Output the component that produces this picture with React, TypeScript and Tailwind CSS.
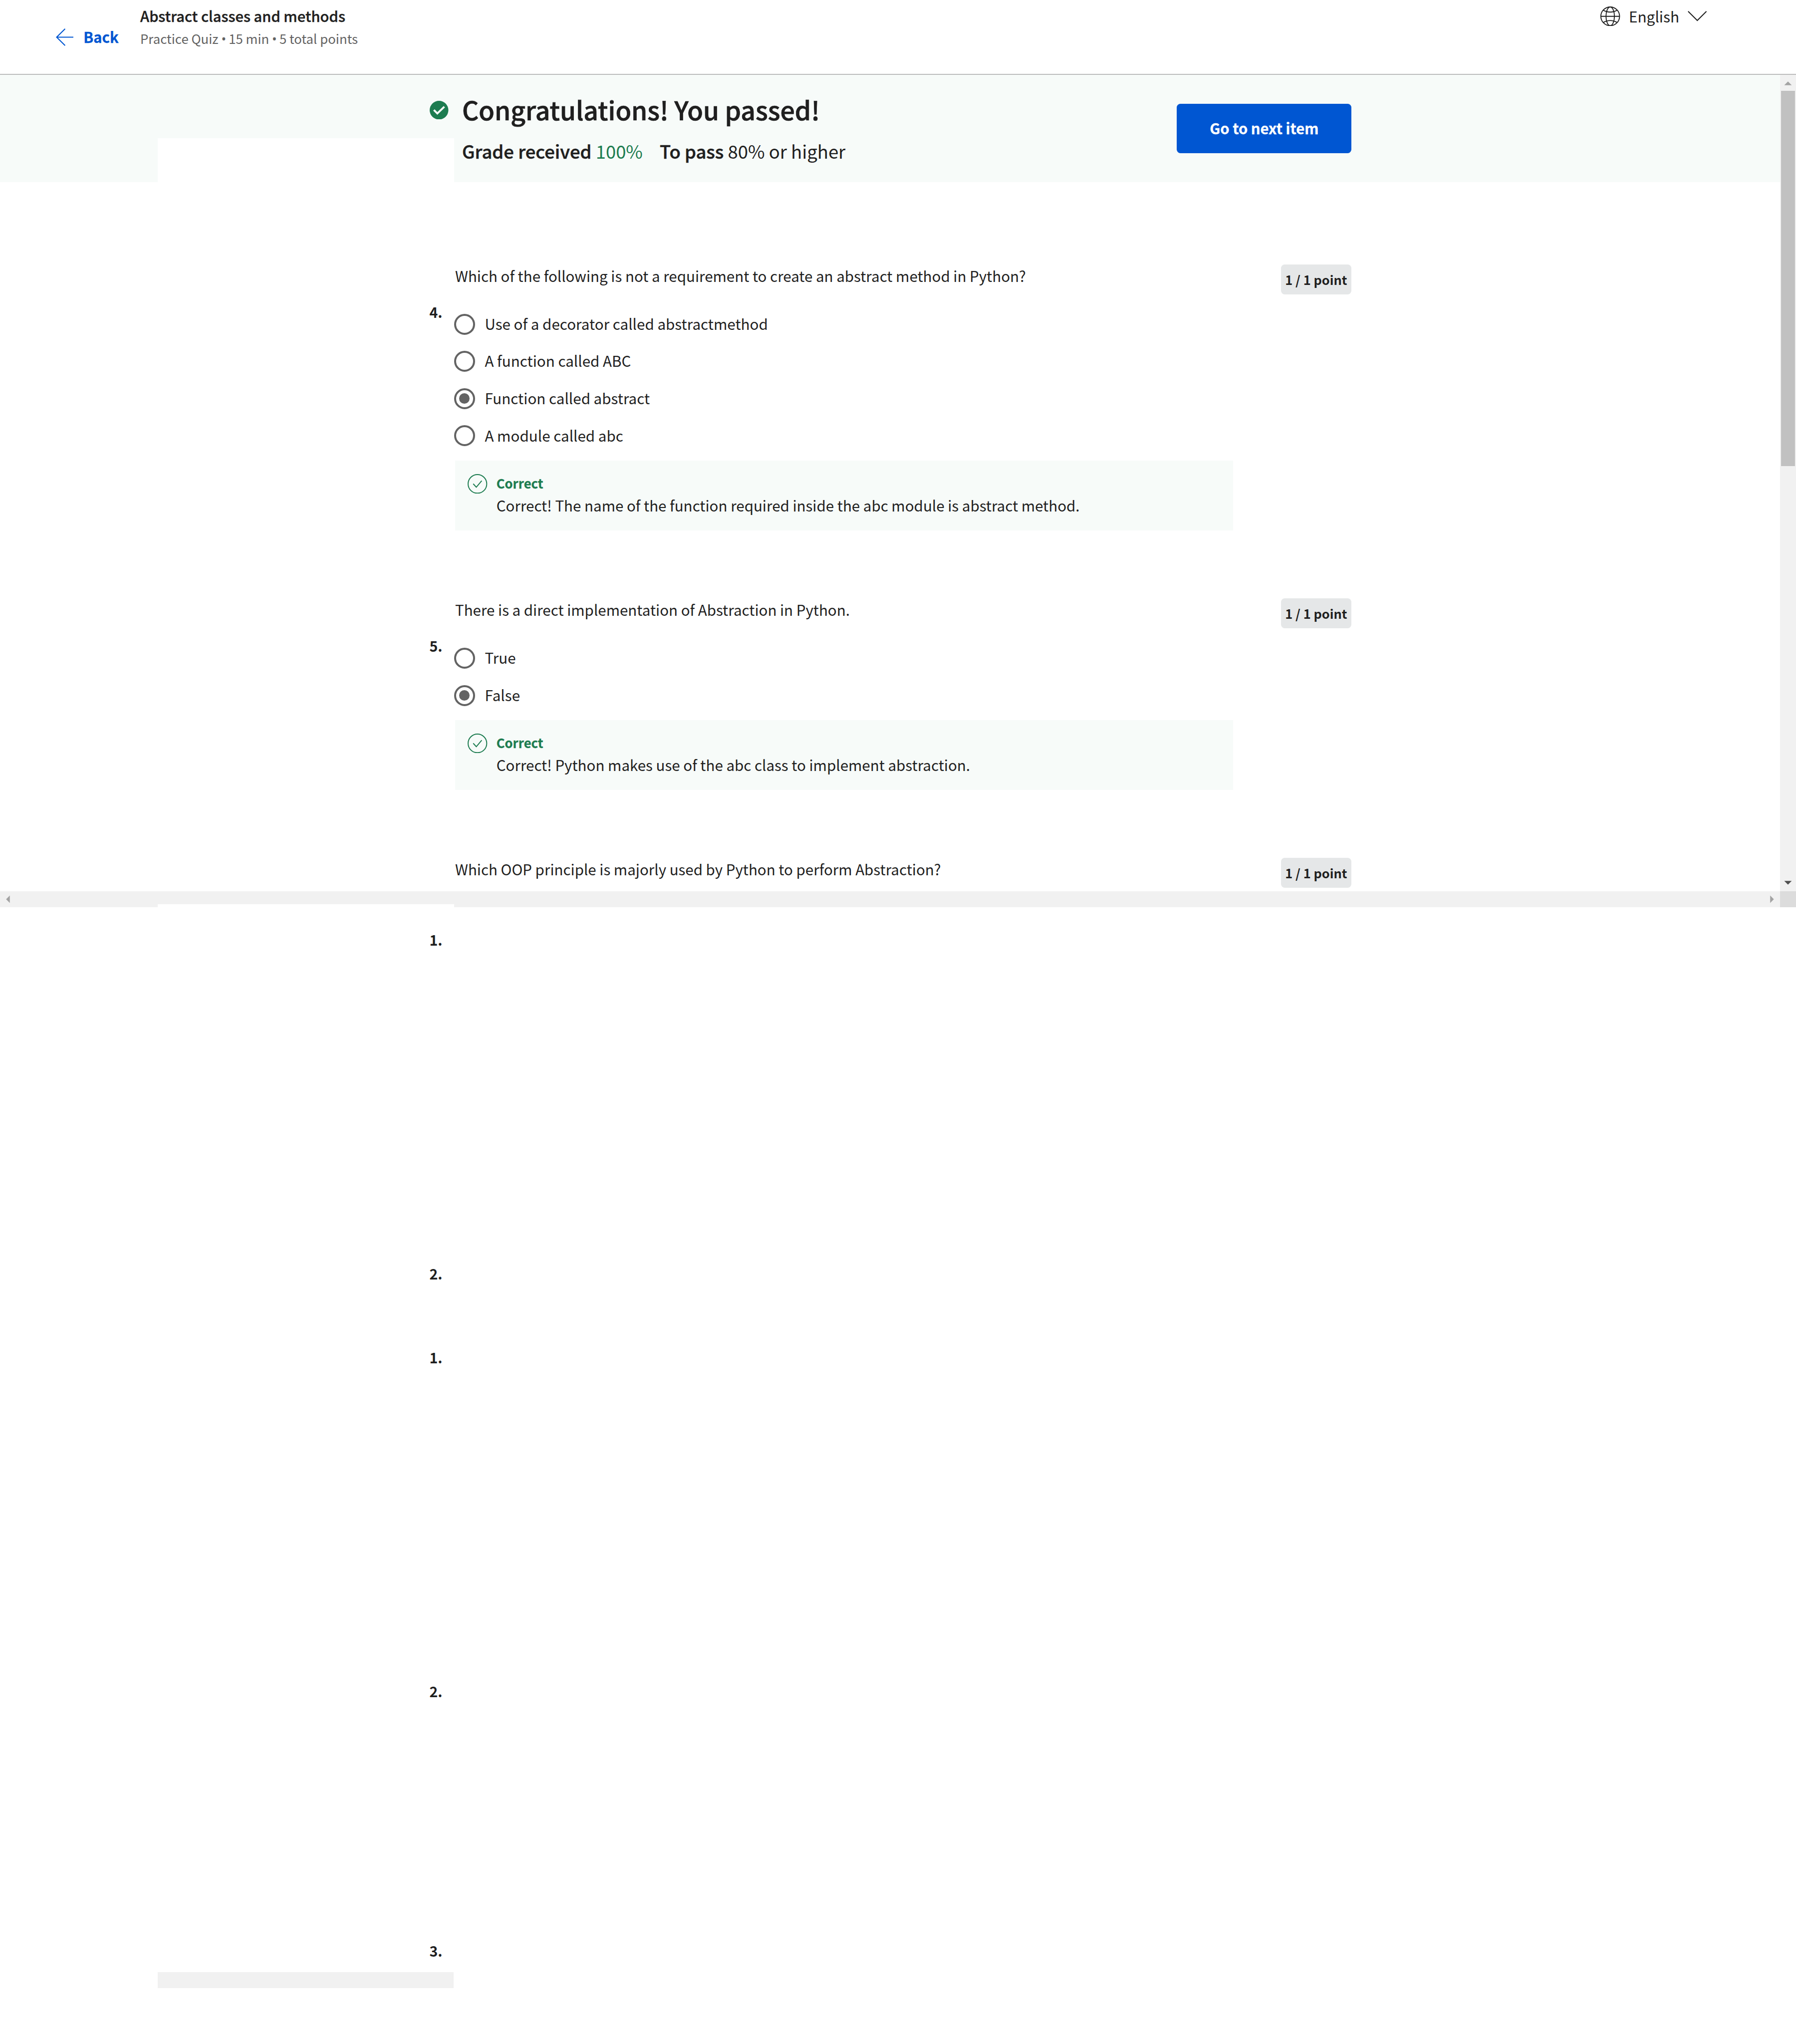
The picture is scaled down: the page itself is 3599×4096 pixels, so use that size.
type Option = { label: string; checked?: boolean };
type Question = { no: string; prompt: string; options: Option[]; feedback: string };

const questions: Question[] = [
  {
    no: "4.",
    prompt: "Which of the following is not a requirement to create an abstract method in Python?",
    options: [
      { label: "Use of a decorator called abstractmethod" },
      { label: "A function called ABC" },
      { label: "Function called abstract", checked: true },
      { label: "A module called abc" },
    ],
    feedback: "Correct! The name of the function required inside the abc module is abstract method.",
  },
  {
    no: "5.",
    prompt: "There is a direct implementation of Abstraction in Python.",
    options: [{ label: "True" }, { label: "False", checked: true }],
    feedback: "Correct! Python makes use of the abc class to implement abstraction.",
  },
];

function BackArrow() {
  return (
    <svg viewBox="0 0 37 37" className="h-[35px] w-[35px]" fill="none" stroke="#0056d2" strokeWidth="2.2">
      <path d="M19.5 0.8 1.6 18.5 19.5 36.2M1.6 18.5H37" />
    </svg>
  );
}

function Globe() {
  return (
    <svg viewBox="0 0 42 42" className="h-[39.4px] w-[39.4px]" fill="none" stroke="#1f1f1f" strokeWidth="2">
      <circle cx="21" cy="21" r="20" />
      <ellipse cx="21" cy="21" rx="9" ry="20" />
      <path d="M1 21H41M6 7.8Q21 16.2 36 7.8M6 34.2Q21 25.8 36 34.2" />
    </svg>
  );
}

function ChevronDown() {
  return (
    <svg viewBox="0 0 41 22" className="h-[20.5px] w-[38.4px]" fill="none" stroke="#1f1f1f" strokeWidth="2.1">
      <path d="M0.8 0.8 20.5 20.4 40.2 0.8" />
    </svg>
  );
}

function PassedIcon() {
  return (
    <svg viewBox="0 0 40 40" className="mt-[51.5px] h-[37.5px] w-[37.5px]">
      <circle cx="20" cy="20" r="20" fill="#1d7c50" />
      <path d="M9 19.6 16.4 27 31.3 12.6" fill="none" stroke="#f7fbf9" strokeWidth="4.2" />
    </svg>
  );
}

function CorrectIcon() {
  return (
    <svg viewBox="0 0 42 42" className="mt-[26.8px] h-[39.4px] w-[39.4px] shrink-0" fill="none" stroke="#1d7c50" strokeWidth="2.1">
      <circle cx="21" cy="21" r="19.9" />
      <path d="M12 20.8 18.6 28 30.2 14.2" />
    </svg>
  );
}

function Points() {
  return (
    <span className="flex h-[60px] w-[140.6px] shrink-0 items-center justify-center rounded-[7.5px] bg-[#e5e7e8] text-[25.45px] font-bold leading-[36px]">
      1 / 1 point
    </span>
  );
}

function Prompt({ text }: { text: string }) {
  return (
    <div className="flex h-[60px] w-[1795.7px] items-start justify-between">
      <p className="whitespace-nowrap pt-[1px] text-[29.52px] leading-[44px]">{text}</p>
      <Points />
    </div>
  );
}

function Radio({ checked }: { checked?: boolean }) {
  return (
    <span className="flex h-[42px] w-[42px] items-center justify-center rounded-full border-[4.5px] border-[#636363]">
      {checked && <span className="h-[21px] w-[21px] rounded-full bg-[#636363]" />}
    </span>
  );
}

function QuestionBlock({ q }: { q: Question }) {
  return (
    <article className="flex pb-[136px]">
      <span className="w-[51.5px] shrink-0 pt-[75px] text-[28.5px] font-bold leading-[40px]">{q.no}</span>
      <div>
        <Prompt text={q.prompt} />
        <ul className="mt-[22.5px]">
          {q.options.map((o) => (
            <li key={o.label} className="-ml-[2.5px] flex h-[74.6px] items-center gap-[20px]">
              <Radio checked={o.checked} />
              <span className="pb-[1.5px] text-[29.6px] leading-[44px]">{o.label}</span>
            </li>
          ))}
        </ul>
        <div className="mt-[12.1px] flex h-[140.4px] w-[1558.7px] gap-[18px] bg-[#f7fbf9] pl-[25.3px]">
          <CorrectIcon />
          <div className="pt-[27.2px]">
            <p className="text-[25.68px] font-bold leading-[36px] text-[#1d7c50] [-webkit-text-stroke:0.3px]">Correct</p>
            <p className="mt-[5.2px] whitespace-nowrap text-[29.54px] leading-[44px]">{q.feedback}</p>
          </div>
        </div>
      </div>
    </article>
  );
}

function Header() {
  return (
    <header className="flex h-[150px] items-start border-b-2 border-[#bdbdbd] pl-[112px] pr-[178.5px]">
      <div className="mt-[52px] flex h-[44px] w-[169px] items-center gap-[20.3px] text-[#0056d2]">
        <BackArrow />
        <span className="pb-[2.5px] text-[29.35px] font-bold leading-[40px] [-webkit-text-stroke:0.3px]">Back</span>
      </div>
      <div className="mt-[12.6px]">
        <h1 className="text-[29.15px] font-medium leading-[36px] [-webkit-text-stroke:0.4px]">Abstract classes and methods</h1>
        <p className="mt-[10px] flex whitespace-pre text-[25.8px] leading-[36px] text-[#636363]">
          <span>Practice Quiz </span>
          <span className="w-[9px] text-center font-['Noto_Sans']">•</span>
          <span> 15 min </span>
          <span className="w-[9px] text-center font-['Noto_Sans']">•</span>
          <span> 5 total points</span>
        </p>
      </div>
      <div className="ml-auto mt-[11px] flex h-[43px] items-center">
        <Globe />
        <span className="ml-[17px] pb-[2px] text-[29.8px] leading-[40px]">English</span>
        <span className="ml-[17px]">
          <ChevronDown />
        </span>
      </div>
    </header>
  );
}

function Banner() {
  return (
    <section className="relative flex h-[214.6px] items-start bg-[#f7fbf9] pl-[861.3px]">
      {/* blank side rail over the banner's lower edge */}
      <div className="absolute bottom-0 left-[316px] h-[88px] w-[593.5px] bg-white" />
      <PassedIcon />
      <div className="ml-[27.2px] w-[1432px] pt-[33.7px]">
        <h2 className="text-[51.6px] font-medium leading-[70px] [-webkit-text-stroke:0.7px]">Congratulations! You passed!</h2>
        <p className="mt-[23px] flex whitespace-pre text-[36.45px] leading-[50px]">
          <span className="w-[396px]">
            <span className="font-medium [-webkit-text-stroke:0.5px]">Grade received </span>
            <span className="text-[#1d7c50]">100%</span>
          </span>
          <span>
            <span className="font-medium [-webkit-text-stroke:0.5px]">To pass </span>80% or higher
          </span>
        </p>
      </div>
      <button className="mt-[58px] flex h-[99.4px] w-[349.7px] items-center justify-center rounded-[7.5px] bg-[#0056d2] pb-[4px] pl-px text-[29.25px] font-bold leading-[40px] text-white [-webkit-text-stroke:0.3px]">
        Go to next item
      </button>
    </section>
  );
}

function Triangle({ points, color }: { points: string; color: string }) {
  return (
    <svg viewBox="0 0 34 34" className="h-[31.9px] w-[31.9px]">
      <polygon points={points} fill={color} />
    </svg>
  );
}

function VerticalScrollbar() {
  return (
    <div className="flex w-[32px] shrink-0 flex-col items-center justify-between bg-[#f1f1f1]">
      <div className="flex flex-col items-center">
        <Triangle points="9,22 25,22 17,14" color="#a3a3a3" />
        <div className="h-[751.7px] w-[28.1px] bg-[#c1c1c1]" />
      </div>
      <Triangle points="9,12 25,12 17,20" color="#505050" />
    </div>
  );
}

function HorizontalScrollbar() {
  return (
    <div className="relative flex h-[31.9px] bg-[#f1f1f1]">
      <div className="absolute bottom-0 left-[316px] h-[6.5px] w-[593.5px] bg-white" />
      <div className="flex flex-1 justify-between">
        <Triangle points="21,9 21,25 13,17" color="#a3a3a3" />
        <Triangle points="13,9 13,25 21,17" color="#a3a3a3" />
      </div>
      <div className="w-[32px] bg-[#dcdcdc]" />
    </div>
  );
}

function Overflow() {
  return (
    <div className="pl-[860.5px] text-[28.5px] font-bold leading-[40px]">
      <p className="pt-[44.5px]">1.</p>
      <p className="pt-[629.2px]">2.</p>
      <p className="pt-[127.7px]">1.</p>
      <p className="pt-[629.2px]">2.</p>
      <p className="pt-[480.2px]">3.</p>
    </div>
  );
}

export default function App() {
  return (
    <div className="h-[4096px] w-[3599px] overflow-hidden bg-white font-['Noto_Sans_CJK_SC','Noto_Sans',sans-serif] text-[#1f1f1f]">
      <Header />
      <div className="flex h-[1636.3px] overflow-hidden">
        <main className="flex-1">
          <Banner />
          <div className="pl-[860.5px] pt-[165.2px]">
            {questions.map((q) => (
              <QuestionBlock key={q.no} q={q} />
            ))}
            <div className="pl-[51.5px]">
              <Prompt text="Which OOP principle is majorly used by Python to perform Abstraction?" />
            </div>
          </div>
        </main>
        <VerticalScrollbar />
      </div>
      <HorizontalScrollbar />
      <Overflow />
      <div className="ml-[316px] mt-[23.4px] h-[31.9px] w-[592.5px] bg-[#f1f1f1]" />
    </div>
  );
}
